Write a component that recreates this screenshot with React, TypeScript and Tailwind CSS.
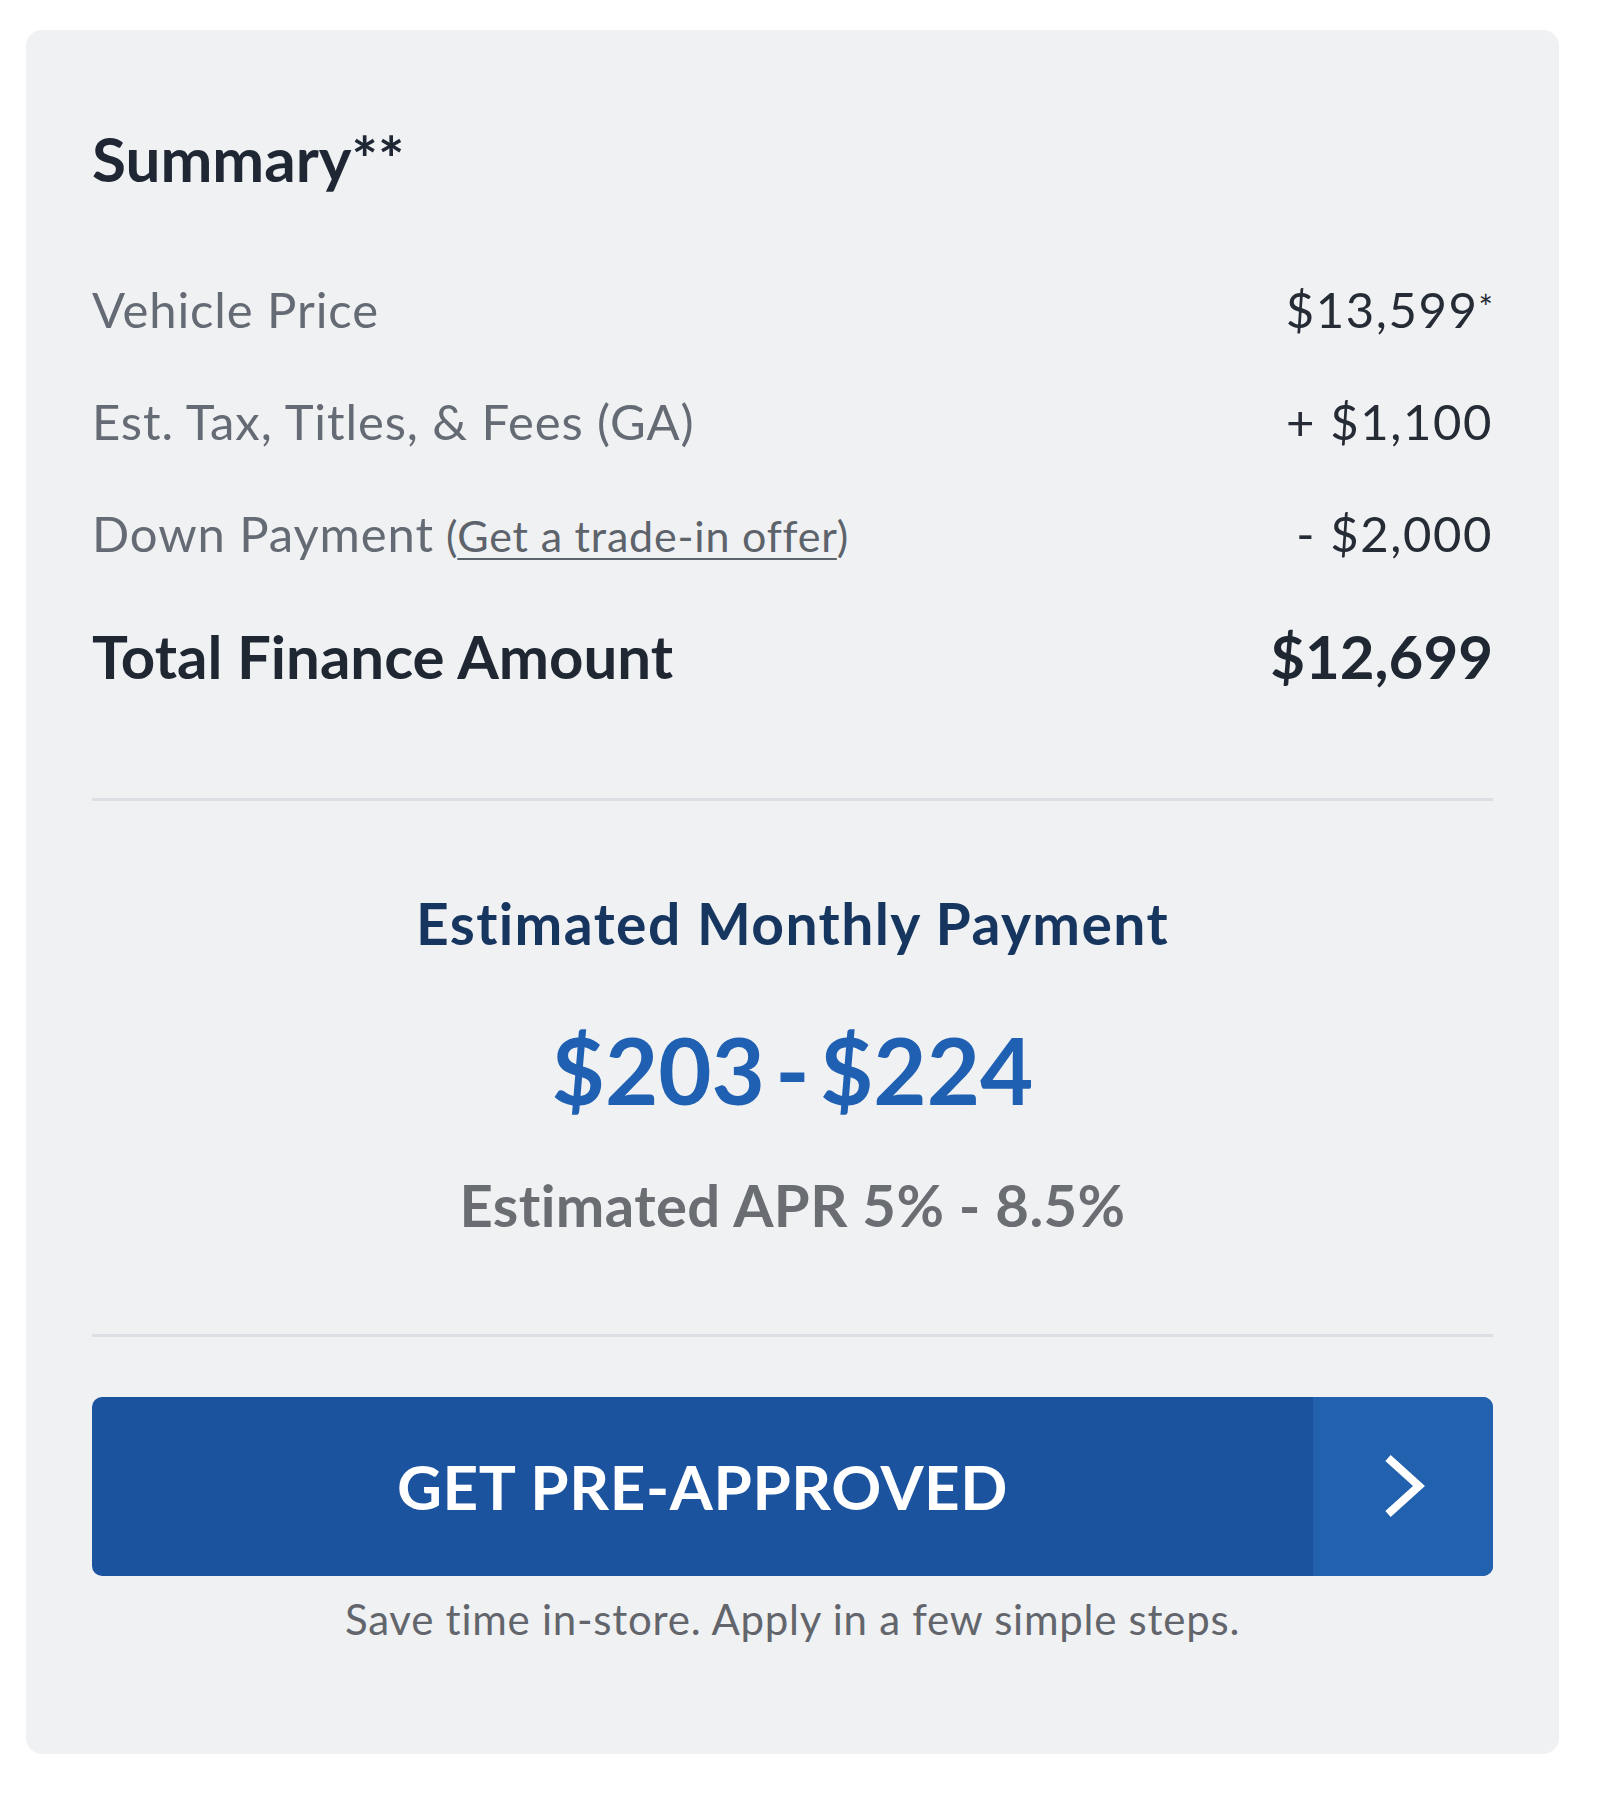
const rows = [
  { label: "Vehicle Price", value: "$13,599", star: true },
  { label: "Est. Tax, Titles, & Fees (GA)", value: "+ $1,100" },
  { label: "Down Payment", link: "Get a trade-in offer", value: "- $2,000" },
];

const App = () => {
  return (
    <div className="min-h-screen bg-white pt-[30px] pl-[26px]" style={{ fontFamily: "Lato, 'Open Sans', sans-serif" }}>
      {/* Summary card */}
      <div className="w-[1533px] rounded-[16px] bg-[#f0f1f3] px-[66px] pt-[91px] pb-[110px]">
        <h2 className="text-[62px] leading-[1.2] font-bold text-[#1e2733]">Summary**</h2>

        {/* Price rows */}
        <div className="mt-[56px]">
          {rows.map((r) => (
            <div key={r.label} className="flex items-baseline justify-between text-[49px] leading-[112px]">
              <span className="tracking-[0.9px] text-[#656b74]">
                {r.label}
                {r.link && (
                  <span className="ml-[12px] text-[43px] tracking-[0.8px] text-[#5d636b]">
                    (<a href="#" className="underline decoration-[2px] underline-offset-[6px]">{r.link}</a>)
                  </span>
                )}
              </span>
              <span className="tracking-[1.6px] text-[#262c36]">
                {r.value}
                {r.star && <span className="text-[34px] tracking-normal align-[8px]">*</span>}
              </span>
            </div>
          ))}
        </div>

        <div className="mt-[28px] flex items-baseline justify-between text-[60px] leading-[1.2] font-bold text-[#1f2732]">
          <span>Total Finance Amount</span>
          <span>$12,699</span>
        </div>

        <div className="mt-[106px] h-[3px] bg-[#dcdfe3]" />

        {/* Monthly payment */}
        <div className="flex flex-col items-center text-center">
          <h3 className="mt-[88px] text-[57px] leading-[1.2] font-bold tracking-[1.4px] text-[#16365f]">Estimated Monthly Payment</h3>
          <div className="mt-[57px] text-[92px] leading-[1.2] font-bold text-[#1f60b3] [word-spacing:-12px]">$203 - $224</div>
          <div className="mt-[45px] text-[58px] leading-[1.2] font-bold tracking-[0.4px] text-[#6a6d72]">Estimated APR 5% - 8.5%</div>
        </div>

        <div className="mt-[94px] h-[3px] bg-[#dcdfe3]" />

        {/* CTA */}
        <button className="mt-[60px] flex h-[179px] w-full overflow-hidden rounded-[10px] bg-[#1c539e] text-white">
          <span className="flex flex-1 items-center justify-center text-[62px] font-bold leading-none tracking-[0.6px]">GET PRE-APPROVED</span>
          <span className="flex w-[180px] items-center justify-center bg-[#2161ae]">
            <svg width="44" height="66" viewBox="0 0 44 66" fill="none">
              <polyline points="7,5 38,33 7,61" stroke="white" strokeWidth="8" strokeLinejoin="miter" />
            </svg>
          </span>
        </button>
        <p className="mt-[18px] text-center text-[42px] leading-[1.2] tracking-[0.75px] text-[#62666c]">
          Save time in-store. Apply in a few simple steps.
        </p>
      </div>
    </div>
  );
};

export default App;
